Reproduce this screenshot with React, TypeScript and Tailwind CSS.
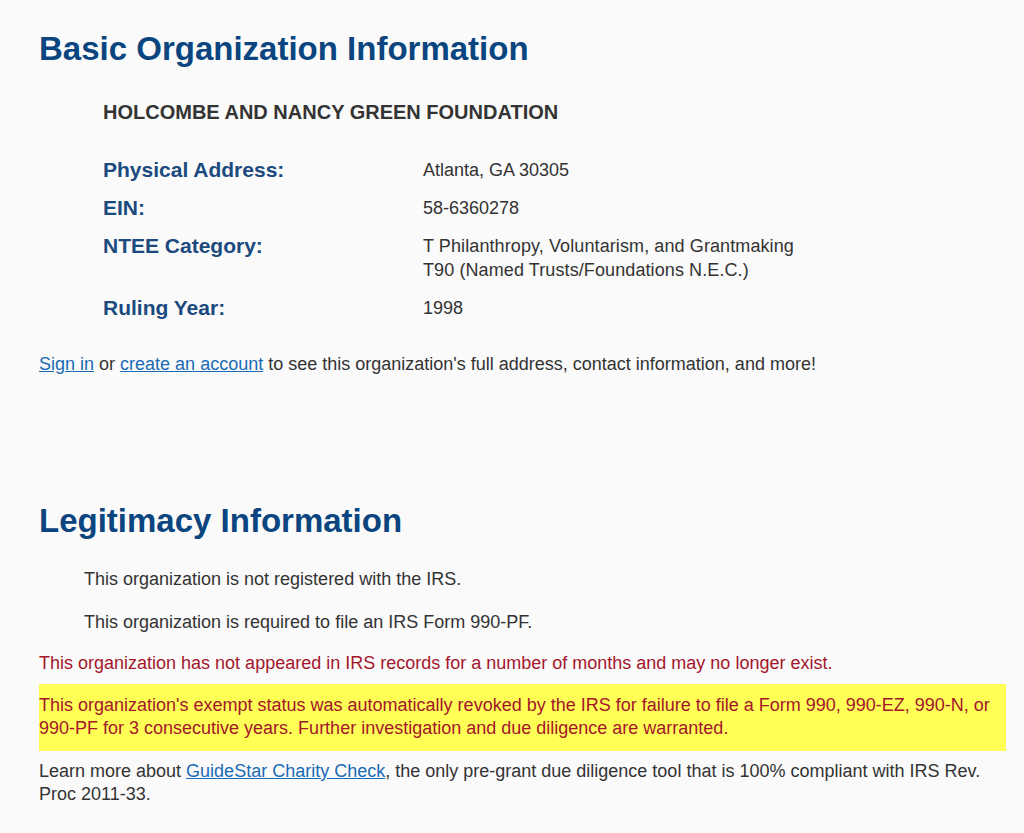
import React from "react";

export default function App() {
  return (
    <div className="min-h-[833px] w-[1024px] bg-[#fafafa] text-[#333333]" style={{ fontFamily: '"Liberation Sans", Arial, sans-serif' }}>
      <div className="pl-[39px] pr-[18px] pt-[30px]">
        <h1 className="text-[33px] leading-[38px] font-bold text-[#0b4580]">Basic Organization Information</h1>
        <div className="pl-[64px] pt-[32px]">
          <div className="text-[20px] leading-[24px] font-bold text-[#333333]">HOLCOMBE AND NANCY GREEN FOUNDATION</div>
          <div className="mt-[34px] grid grid-cols-[320px_1fr] gap-y-[14px] text-[18px] leading-[24px]">
            <div className="font-bold text-[21px] text-[#1b4a7e]">Physical Address:</div>
            <div>Atlanta, GA 30305</div>
            <div className="font-bold text-[21px] text-[#1b4a7e]">EIN:</div>
            <div>58-6360278</div>
            <div className="font-bold text-[21px] text-[#1b4a7e]">NTEE Category:</div>
            <div className="tracking-[0.1px]">
              <div>T Philanthropy, Voluntarism, and Grantmaking</div>
              <div>T90 (Named Trusts/Foundations N.E.C.)</div>
            </div>
            <div className="font-bold text-[21px] text-[#1b4a7e]">Ruling Year:</div>
            <div>1998</div>
          </div>
        </div>
        <p className="mt-[32px] text-[18px] leading-[24px]">
          <a href="#" className="text-[#1a6bb5] underline">Sign in</a> or{" "}
          <a href="#" className="text-[#1a6bb5] underline">create an account</a> to see this organization's full address, contact information, and more!
        </p>
        <h2 className="mt-[126px] text-[33px] leading-[38px] font-bold text-[#0b4580]">Legitimacy Information</h2>
        <div className="pl-[45px] pt-[27px] text-[18px] leading-[24px]">
          <p>This organization is not registered with the IRS.</p>
          <p className="mt-[19px]">This organization is required to file an IRS Form 990-PF.</p>
        </div>
        <p className="mt-[17px] text-[18px] leading-[24px] text-[#a3162c]">This organization has not appeared in IRS records for a number of months and may no longer exist.</p>
        <div className="mt-[9px] bg-[#ffff55] pt-[10px] pb-[11px] text-[18px] leading-[23px] text-[#a3162c]">
          This organization's exempt status was automatically revoked by the IRS for failure to file a Form 990, 990-EZ, 990-N, or 990-PF for 3 consecutive years. Further investigation and due diligence are warranted.
        </div>
        <p className="mt-[9px] text-[18px] leading-[23px]">
          Learn more about <a href="#" className="text-[#1a6bb5] underline">GuideStar Charity Check</a>, the only pre-grant due diligence tool that is 100% compliant with IRS Rev. Proc 2011-33.
        </p>
      </div>
    </div>
  );
}
